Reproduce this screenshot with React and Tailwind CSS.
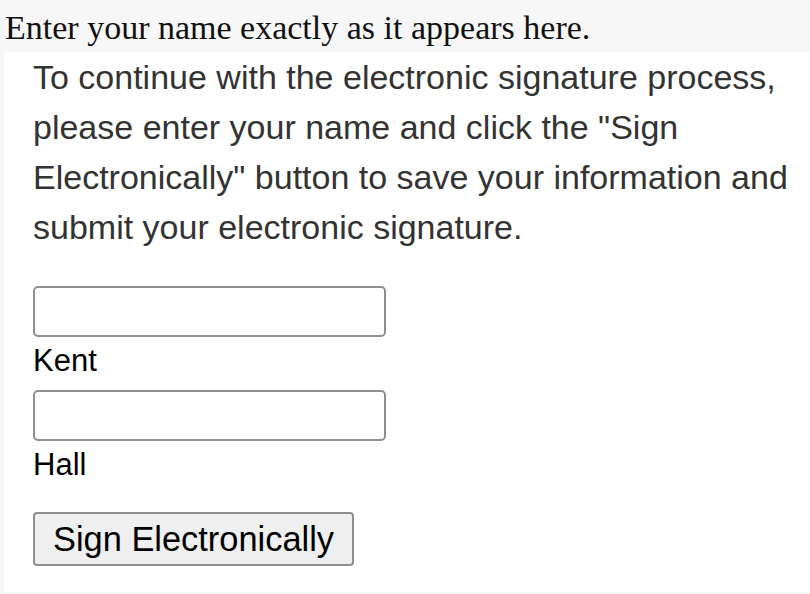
const fields = ["Kent", "Hall"];

const App = () => {
    return (
        <div className="w-[810px] h-[594px] bg-[#f7f7f7] overflow-hidden">
            <h1 className="h-[52px] pt-[3px] pl-[5px] text-[34px] leading-[49px] text-[#111] font-normal whitespace-nowrap"
                style={{ fontFamily: '"Liberation Serif", "DejaVu Serif", serif' }}>
                Enter your name exactly as it appears here.
            </h1>

            <div className="ml-[4px] bg-white pl-[29px] pr-[4px] pb-[26px] h-[540px]"
                style={{ fontFamily: '"Liberation Sans", Arial, sans-serif' }}>
                <p className="text-[34px] leading-[50px] text-[#333]">
                    To continue with the electronic signature process, please enter your name and click the "Sign Electronically" button to save your information and submit your electronic signature.
                </p>

                <div className="mt-[34px] flex flex-col">
                    {fields.map((name, i) => (
                        <div key={name} className={i > 0 ? "mt-[11px]" : ""}>
                            <input type="text"
                                className="block w-[353px] h-[51px] bg-white border-2 border-[#8f8f8f] rounded-[5px] px-2 text-[30px] outline-none" />
                            <label className="block mt-[7px] text-[31px] leading-[34.5px] text-black">{name}</label>
                        </div>
                    ))}
                </div>

                <button type="button"
                    className="mt-[30px] h-[54px] w-[321px] bg-[#efefef] border-2 border-[#8f8f8f] rounded-[4px] text-[34.4px] leading-none text-black whitespace-nowrap">
                    Sign Electronically
                </button>
            </div>
        </div>
    );
};

export default App;
